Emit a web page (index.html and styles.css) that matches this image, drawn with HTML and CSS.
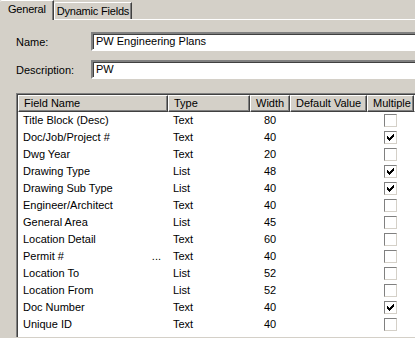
FILE: index.html
```html
<!DOCTYPE html>
<html lang="en">
<head>
  <meta charset="UTF-8">
  <meta name="viewport" content="width=device-width, initial-scale=1.0">
  <title>Dynamic Fields</title>
  <link rel="stylesheet" href="styles.css">
</head>
<body>
  <div class="tabs">
    <div class="tab active">General</div>
    <div class="tab">Dynamic Fields</div>
  </div>
  <div class="panel">
    <div class="form-row">
      <label class="form-label">Name:</label>
      <div class="field">PW Engineering Plans</div>
    </div>
    <div class="form-row">
      <label class="form-label">Description:</label>
      <div class="field">PW</div>
    </div>

    <div class="listview">
      <div class="lv-row lv-header">
        <div class="hd">Field Name</div>
        <div class="hd">Type</div>
        <div class="hd">Width</div>
        <div class="hd">Default Value</div>
        <div class="hd">Multiple</div>
        <div class="hd hd-fill"></div>
      </div>

      <div class="lv-row"><div class="cell">Title Block (Desc)</div><div class="cell">Text</div><div class="cell num">80</div><div class="cell"></div><div class="cell chk"><span class="box"></span></div></div>
      <div class="lv-row"><div class="cell">Doc/Job/Project #</div><div class="cell">Text</div><div class="cell num">40</div><div class="cell"></div><div class="cell chk"><span class="box checked"><svg width="9" height="9" viewBox="0 0 9 9" shape-rendering="crispEdges"><path d="M1 3h1v1h1v1h1v-1h1v-1h1v-1h1v-1h1v3h-1v1h-1v1h-1v1h-1v1h-1v-1h-1v-1h-1z" fill="#000"/></svg></span></div></div>
      <div class="lv-row"><div class="cell">Dwg Year</div><div class="cell">Text</div><div class="cell num">20</div><div class="cell"></div><div class="cell chk"><span class="box"></span></div></div>
      <div class="lv-row"><div class="cell">Drawing Type</div><div class="cell">List</div><div class="cell num">48</div><div class="cell"></div><div class="cell chk"><span class="box checked"><svg width="9" height="9" viewBox="0 0 9 9" shape-rendering="crispEdges"><path d="M1 3h1v1h1v1h1v-1h1v-1h1v-1h1v-1h1v3h-1v1h-1v1h-1v1h-1v1h-1v-1h-1v-1h-1z" fill="#000"/></svg></span></div></div>
      <div class="lv-row"><div class="cell">Drawing Sub Type</div><div class="cell">List</div><div class="cell num">40</div><div class="cell"></div><div class="cell chk"><span class="box checked"><svg width="9" height="9" viewBox="0 0 9 9" shape-rendering="crispEdges"><path d="M1 3h1v1h1v1h1v-1h1v-1h1v-1h1v-1h1v3h-1v1h-1v1h-1v1h-1v1h-1v-1h-1v-1h-1z" fill="#000"/></svg></span></div></div>
      <div class="lv-row"><div class="cell">Engineer/Architect</div><div class="cell">Text</div><div class="cell num">40</div><div class="cell"></div><div class="cell chk"><span class="box"></span></div></div>
      <div class="lv-row"><div class="cell">General Area</div><div class="cell">List</div><div class="cell num">45</div><div class="cell"></div><div class="cell chk"><span class="box"></span></div></div>
      <div class="lv-row"><div class="cell">Location Detail</div><div class="cell">Text</div><div class="cell num">60</div><div class="cell"></div><div class="cell chk"><span class="box"></span></div></div>
      <div class="lv-row"><div class="cell split"><span>Permit #</span><span class="dots">...</span></div><div class="cell">Text</div><div class="cell num">40</div><div class="cell"></div><div class="cell chk"><span class="box"></span></div></div>
      <div class="lv-row"><div class="cell">Location To</div><div class="cell">List</div><div class="cell num">52</div><div class="cell"></div><div class="cell chk"><span class="box"></span></div></div>
      <div class="lv-row"><div class="cell">Location From</div><div class="cell">List</div><div class="cell num">52</div><div class="cell"></div><div class="cell chk"><span class="box"></span></div></div>
      <div class="lv-row"><div class="cell">Doc Number</div><div class="cell">Text</div><div class="cell num">40</div><div class="cell"></div><div class="cell chk"><span class="box checked"><svg width="9" height="9" viewBox="0 0 9 9" shape-rendering="crispEdges"><path d="M1 3h1v1h1v1h1v-1h1v-1h1v-1h1v-1h1v3h-1v1h-1v1h-1v1h-1v1h-1v-1h-1v-1h-1z" fill="#000"/></svg></span></div></div>
      <div class="lv-row"><div class="cell">Unique ID</div><div class="cell">Text</div><div class="cell num">40</div><div class="cell"></div><div class="cell chk"><span class="box"></span></div></div>
    </div>
  </div>
</body>
</html>
```

FILE: styles.css
```css
body {
  margin: 0;
  background: #d4d0c8;
  color: #000;
  font-family: 'Liberation Sans', Arial, sans-serif;
  font-size: 11px;
  width: 415px;
  height: 338px;
  overflow: hidden;
}

.tabs {
  display: flex;
  align-items: flex-end;
  height: 19px;
}

.tab {
  height: 16px;
  line-height: 16px;
  padding: 0 2px 0 2px;
  border-top: 1px solid #fff;
  border-left: 1px solid #fff;
  border-right: 1px solid #404040;
  box-shadow: inset -1px 0 #808080;
  border-top-left-radius: 2px;
  background: #d4d0c8;
  white-space: nowrap;
  letter-spacing: -0.2px;
}

.tab.active {
  height: 19px;
  line-height: 17px;
  padding: 0 7px 0 8px;
  margin-bottom: -1px;
  border-left: none;
  position: relative;
  z-index: 1;
}

.panel {
  border-top: 1px solid #fff;
  padding-top: 12px;
}

.form-row {
  display: flex;
  align-items: center;
  margin-bottom: 9px;
}

.form-label {
  width: 75px;
  padding-left: 16px;
}

.field {
  flex: 1;
  height: 15px;
  line-height: 15px;
  padding-left: 3px;
  background: #fff;
  border-top: 2px solid #808080;
  border-left: 2px solid #808080;
  box-shadow: inset 1px 1px #404040;
  border-bottom: 2px solid #fff;
  margin-right: -10px;
  white-space: nowrap;
}

.listview {
  margin: 14px -10px 0 16px;
  background: #fff;
  border-top: 1px solid #808080;
  border-left: 1px solid #808080;
  box-shadow: inset 1px 1px #404040;
  padding: 1px 0 0 1px;
  height: 242px;
  overflow: hidden;
}

.lv-row {
  display: grid;
  grid-template-columns: 150px 82px 40px 77px 47px 1fr;
  height: 17px;
  line-height: 17px;
}

.lv-header {
  height: 17px;
  line-height: 15px;
}

.hd {
  background: #d4d0c8;
  border-top: 1px solid #fff;
  border-left: 1px solid #fff;
  border-right: 1px solid #404040;
  border-bottom: 1px solid #404040;
  box-shadow: inset -1px -1px #808080;
  padding-left: 5px;
  white-space: nowrap;
  overflow: hidden;
}

.hd-fill {
  border-right: none;
}

.cell {
  padding-left: 5px;
  white-space: nowrap;
  overflow: hidden;
}

.cell.num {
  padding-left: 0;
  text-align: center;
}

.cell.split {
  display: flex;
  justify-content: space-between;
  padding-right: 7px;
}

.cell.chk {
  display: flex;
  align-items: center;
  justify-content: center;
  padding-left: 0;
}

.box {
  width: 11px;
  height: 11px;
  background: #fff;
  border-top: 1px solid #808080;
  border-left: 1px solid #808080;
  border-right: 1px solid #d4d0c8;
  border-bottom: 1px solid #d4d0c8;
  display: flex;
  align-items: center;
  justify-content: center;
}

.box svg {
  display: block;
}
```
